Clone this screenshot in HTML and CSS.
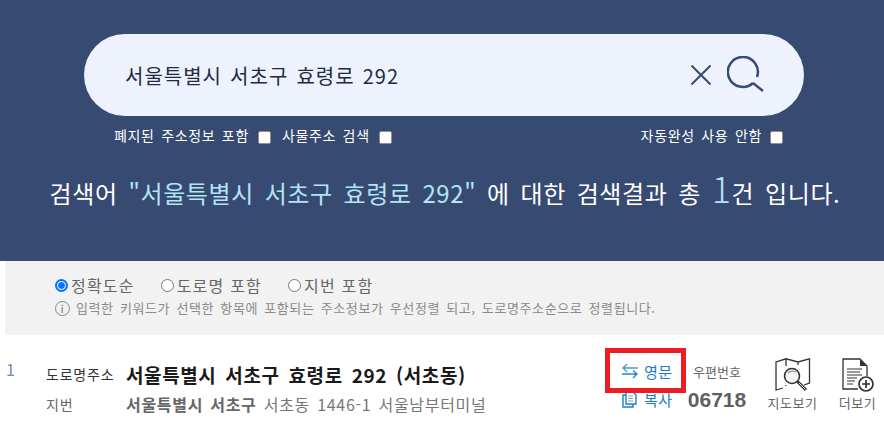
FILE: index.html
```html
<!DOCTYPE html>
<html lang="ko">
<head>
  <meta charset="UTF-8">
  <title>주소 검색</title>
  <link rel="stylesheet" href="styles.css">
</head>
<body>

  <div class="search-area">
    <div class="search-box">
      <span class="search-text">서울특별시 서초구 효령로 292</span>
      <svg class="icon-clear" width="20" height="20" viewBox="0 0 20 20"><path d="M0.5 0.5L19.5 19.5M19.5 0.5L0.5 19.5" stroke="#364b75" stroke-width="2" fill="none"/></svg>
      <svg class="icon-search" width="38" height="38" viewBox="0 0 38 38"><path d="M26 27A15 15 0 1 1 30 21" stroke="#364b75" stroke-width="2.5" fill="none"/><path d="M26 27L36 35" stroke="#364b75" stroke-width="2.5" fill="none"/></svg>
    </div>
    <div class="search-options">
      <label class="option">폐지된 주소정보 포함 <span class="check"></span></label>
      <label class="option">사물주소 검색 <span class="check"></span></label>
      <label class="option option-right">자동완성 사용 안함 <span class="check"></span></label>
    </div>
    <p class="result-msg">검색어 <span class="keyword">"서울특별시 서초구 효령로 292"</span> 에 대한 검색결과 총 <span class="count">1</span>건 입니다.</p>
  </div>

  <div class="filter-panel">
    <div class="radios">
      <label class="radio-item"><span class="radio on"></span>정확도순</label>
      <label class="radio-item"><span class="radio"></span>도로명 포함</label>
      <label class="radio-item"><span class="radio"></span>지번 포함</label>
    </div>
    <p class="filter-note"><span class="info">i</span>입력한 키워드가 선택한 항목에 포함되는 주소정보가 우선정렬 되고, 도로명주소순으로 정렬됩니다.</p>
  </div>

  <div class="result-row">
    <div class="result-no">1</div>
    <div class="addr">
      <div class="addr-line">
        <span class="addr-label">도로명주소</span>
        <strong class="addr-road">서울특별시 서초구 효령로 292 (서초동)</strong>
      </div>
      <div class="addr-line">
        <span class="addr-label sub">지번</span>
        <span class="addr-jibun"><b>서울특별시 서초구</b> 서초동 1446-1 서울남부터미널</span>
      </div>
    </div>
    <div class="links">
      <a class="link-btn">
        <svg width="16" height="16" viewBox="0 0 16 16"><path d="M16 5H1M5 1L1 5L5 9" stroke="#4a9ad4" stroke-width="1.4" fill="none"/><path d="M0 11H15M11 7.5L15 11L11 15" stroke="#2f80c8" stroke-width="1.4" fill="none"/></svg>
        영문
      </a>
      <a class="link-btn">
        <svg width="16" height="17" viewBox="0 0 16 17"><path d="M4 1H11L14 4V13H4ZM4 4H1V16H11V13" stroke="#1f7fc9" stroke-width="1.4" fill="none"/><path d="M6 5H11M6 7.5H11M6 10H11" stroke="#8fa0b0" stroke-width="1" fill="none"/></svg>
        복사
      </a>
    </div>
    <div class="zip">
      <span class="zip-label">우편번호</span>
      <span class="zip-no">06718</span>
    </div>
    <div class="tool">
      <svg width="36" height="34" viewBox="0 0 36 34"><path d="M8 30L1 32V4L11 0.8L23 4L34.5 0.8V25L29 27M11 1V8M23 4V7M11 27V28" stroke="#333" stroke-width="1.3" fill="none"/><circle cx="17" cy="18" r="7.5" fill="#f4f4f4" stroke="#333" stroke-width="1.6"/><path d="M13 15Q16 12 21 14" stroke="#999" stroke-width="1.2" fill="none"/><path d="M22.5 23.5L31 32" stroke="#333" stroke-width="3"/><path d="M24 25L30.5 31.5" stroke="#ddd" stroke-width="1"/></svg>
      <span>지도보기</span>
    </div>
    <div class="tool">
      <svg width="32" height="34" viewBox="0 0 32 34"><path d="M16 31H1V1H18L25 8V18" stroke="#333" stroke-width="1.3" fill="none"/><path d="M18 1L25 8H18Z" fill="#333"/><path d="M5 11H20M5 14H18M5 17H20M5 20H15M5 23H13M5 26H11" stroke="#333" stroke-width="1"/><circle cx="24" cy="26" r="7" fill="#fff" stroke="#333" stroke-width="1.7"/><path d="M24 22V30M20 26H28" stroke="#333" stroke-width="1.7"/></svg>
      <span>더보기</span>
    </div>
  </div>

  <div class="highlight"></div>

</body>
</html>
```

FILE: styles.css
```css
body {
  margin: 0;
  width: 884px;
  height: 432px;
  overflow: hidden;
  position: relative;
  background: #fff;
  font-family: "Noto Sans CJK KR", "Liberation Sans", sans-serif;
}

p {
  margin: 0;
}

.search-area {
  height: 261px;
  box-sizing: border-box;
  padding-top: 34px;
  background: #374a72;
  color: #fff;
}

.search-box {
  width: 720px;
  height: 82px;
  box-sizing: border-box;
  margin-left: 84px;
  padding: 0 39px 0 41px;
  display: flex;
  align-items: center;
  background: #edf2fd;
  border-radius: 41px;
}

.search-text {
  flex: 1;
  font-size: 20px;
  letter-spacing: 1px;
  word-spacing: 1.5px;
  color: #1f2a44;
}

.icon-clear {
  margin-right: 16px;
}

.search-options {
  display: flex;
  align-items: center;
  height: 20px;
  margin: 9px 0 0 114px;
  font-size: 14px;
  letter-spacing: 0.65px;
  word-spacing: 2px;
}

.option {
  display: flex;
  align-items: center;
  gap: 9px;
  margin-right: 11px;
}

.option-right {
  margin-left: auto;
  margin-right: 101px;
  gap: 8px;
}

.check {
  width: 11px;
  height: 11px;
  margin-top: 4px;
  background: #fff;
  border: 1px solid #8f8f8f;
  border-radius: 2px;
}

.result-msg {
  margin-top: 27px;
  padding-left: 6px;
  text-align: center;
  font-size: 24px;
  letter-spacing: 0.6px;
  word-spacing: 3.5px;
  line-height: 36px;
  color: #fff;
}

.keyword {
  color: #b3e5f5;
}

.count {
  font-size: 36px;
  font-weight: 300;
  line-height: 30px;
  color: #b3e5f5;
}

.filter-panel {
  height: 74px;
  box-sizing: border-box;
  margin-left: 5px;
  padding: 13px 0 0 50px;
  background: #f2f2f2;
}

.radios {
  display: flex;
  gap: 26px;
  font-size: 16px;
  letter-spacing: 1.2px;
  line-height: 22px;
  color: #666;
}

.radio-item {
  display: flex;
  align-items: center;
  gap: 3px;
}

.radio {
  width: 11px;
  height: 11px;
  background: #fff;
  border: 1px solid #777;
  border-radius: 50%;
}

.radio.on {
  width: 7px;
  height: 7px;
  background: #0075ff;
  border: 1px solid #fff;
  outline: 2px solid #0075ff;
  margin: 2px;
}

.filter-note {
  display: flex;
  align-items: center;
  margin-top: 3px;
  font-size: 13px;
  letter-spacing: 0.6px;
  word-spacing: 2px;
  line-height: 18px;
  color: #8a8a8a;
}

.info {
  width: 13px;
  height: 13px;
  margin-right: 6px;
  border: 1px solid #888;
  border-radius: 50%;
  font-size: 10px;
  line-height: 13px;
  text-align: center;
  color: #666;
}

.result-row {
  display: flex;
  padding-top: 24px;
}

.result-row > div {
  flex: none;
}

.result-no {
  width: 46px;
  margin-top: -1px;
  padding-left: 6px;
  box-sizing: border-box;
  font-size: 16px;
  line-height: 22px;
  color: #6a8caf;
}

.addr {
  width: 559px;
}

.addr-line {
  display: flex;
  align-items: center;
  height: 30px;
}

.addr-label {
  width: 80px;
  font-size: 14px;
  letter-spacing: 0.8px;
  color: #333;
}

.addr-label.sub {
  color: #666;
}

.addr-road {
  font-size: 19px;
  letter-spacing: 0.6px;
  word-spacing: 3px;
  color: #1a1a1a;
}

.addr-jibun {
  font-size: 16px;
  letter-spacing: 0.7px;
  word-spacing: 2px;
  color: #777;
}

.addr-jibun b {
  color: #666;
}

.links {
  width: 80px;
  margin-top: -2px;
  padding-left: 17px;
  box-sizing: border-box;
}

.link-btn {
  display: flex;
  align-items: center;
  gap: 6px;
  height: 28px;
  font-size: 15px;
  letter-spacing: 0.5px;
  color: #1a7cc8;
}

.zip {
  width: 64px;
  margin-right: 11px;
  display: flex;
  flex-direction: column;
  align-items: center;
}

.zip-label {
  font-size: 13px;
  line-height: 26px;
  color: #666;
}

.zip-no {
  font-family: "Liberation Sans", sans-serif;
  font-size: 21px;
  font-weight: bold;
  line-height: 30px;
  color: #5f5f5f;
}

.tool {
  width: 65px;
  margin-top: -1px;
  display: flex;
  flex-direction: column;
  align-items: center;
  gap: 2px;
  font-size: 13px;
  letter-spacing: 0.6px;
  line-height: 17px;
  color: #666;
}

.highlight {
  position: absolute;
  left: 605px;
  top: 348px;
  width: 71px;
  height: 35px;
  border: 5px solid #ee1c25;
}
```
